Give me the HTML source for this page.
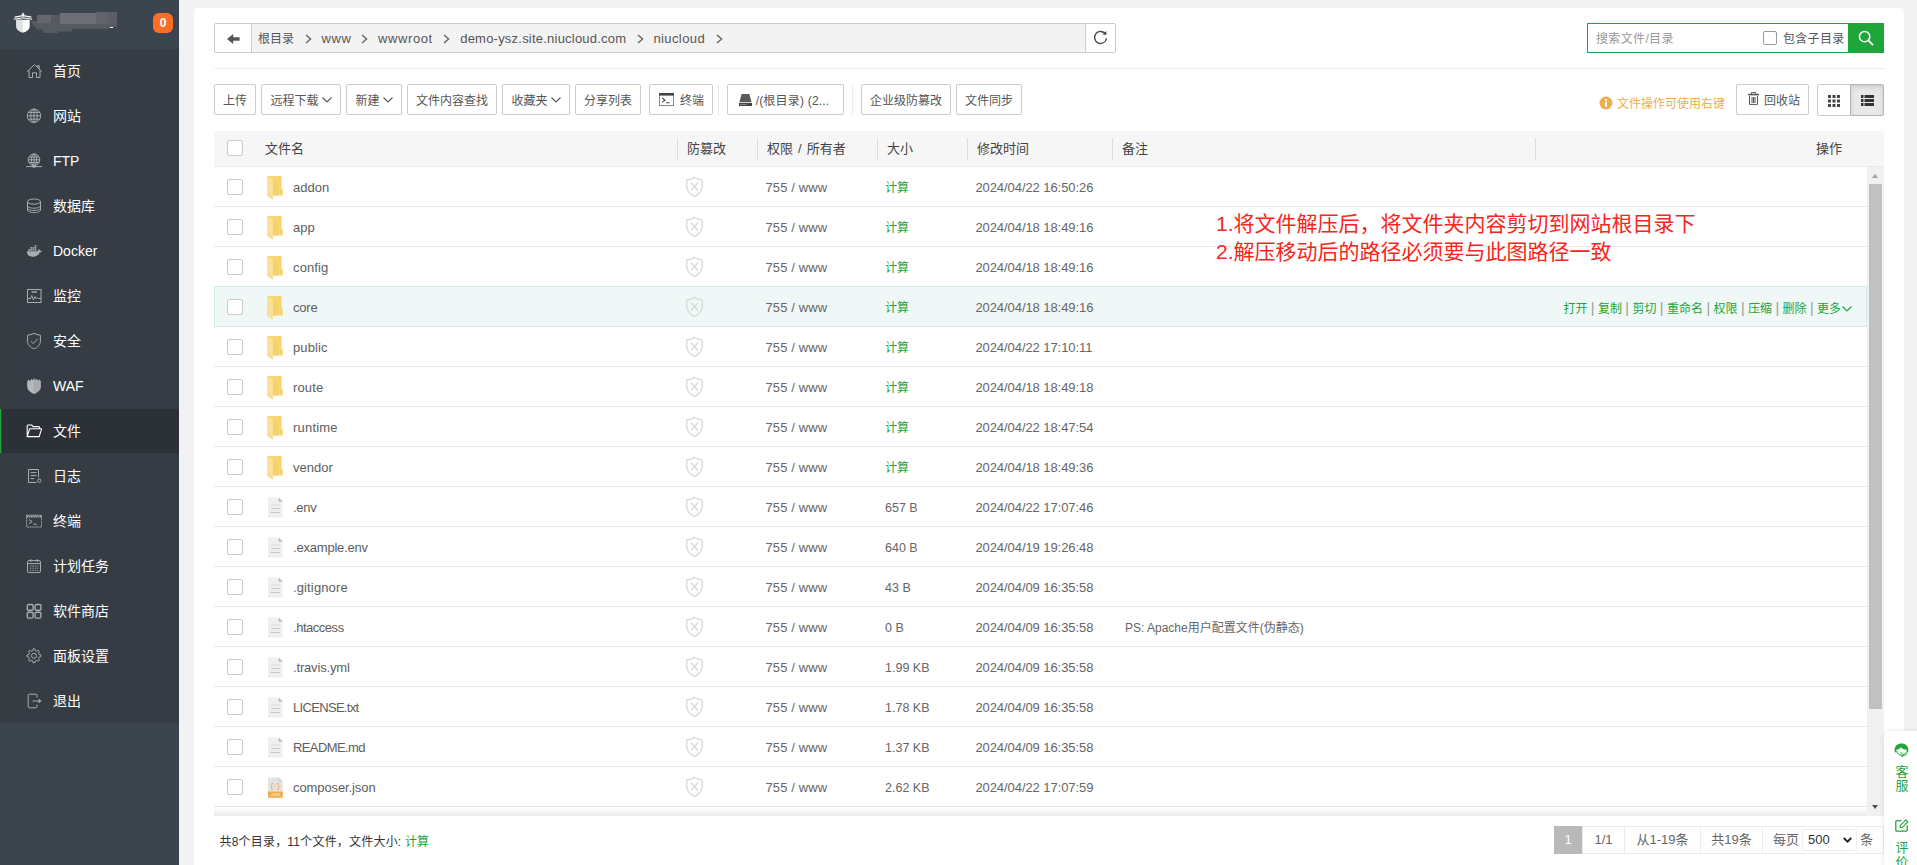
<!DOCTYPE html>
<html lang="zh-CN">
<head>
<meta charset="utf-8">
<title>文件管理</title>
<style>
*{box-sizing:border-box;}
html,body{margin:0;padding:0;}
body{width:1917px;height:865px;overflow:hidden;background:#f2f2f2;font-family:"Liberation Sans","Noto Sans CJK SC",sans-serif;font-size:12px;color:#666;position:relative;}
svg{display:block;}
/* sidebar */
.sidebar{position:absolute;left:0;top:0;width:179px;height:865px;background:#3c444d;}
.sb-head{position:absolute;left:0;top:0;width:179px;height:49px;}
.sb-logo{position:absolute;left:14px;top:12px;}
.sb-blur{position:absolute;left:31px;top:12px;width:86px;height:21px;}
.sb-badge{position:absolute;left:153px;top:13px;width:20px;height:20px;border-radius:6px;background:#fc6d26;color:#fff;font-weight:bold;font-size:12px;line-height:20px;text-align:center;}
.menu{position:absolute;left:0;top:49px;width:179px;height:674px;background:#353c44;margin:0;padding:0;list-style:none;}
.menu li{height:44px;margin-bottom:1px;position:relative;color:#fff;font-size:14px;line-height:44px;padding-left:53px;white-space:nowrap;}
.menu li svg{position:absolute;left:26px;top:14px;}
.menu li.on{background:#2c3138;box-shadow:inset 1.3px 0 0 #20a53a;}
.menu{box-shadow:inset 1px 0 0 #3b3b3c;}

/* main */
.main{position:absolute;left:194px;top:8px;width:1710px;height:880px;background:#fff;border-radius:4px;}
.abs{position:absolute;}
.path{position:absolute;left:20px;top:15px;width:902px;height:30px;border:1px solid #ccc;border-radius:2px;background:#f3f3f3;}
.path .back{position:absolute;left:0;top:0;width:37px;height:28px;background:#fff;border-right:1px solid #ccc;border-radius:2px 0 0 2px;}
.path .refresh{position:absolute;right:0;top:0;width:30px;height:28px;background:#fff;border-left:1px solid #ccc;border-radius:0 2px 2px 0;}
.path .crumbs{position:absolute;left:0;top:0;height:28px;line-height:28px;font-size:13px;color:#555;white-space:nowrap;}
.path .crumbs span{position:absolute;top:0.5px;}
.path .crumbs .cj{font-size:12px;}
.path .cv{position:absolute;top:10px;}
.search{position:absolute;left:1393px;top:15px;width:297px;height:30px;border:1px solid #20a53a;background:#fff;}
.search .ph{position:absolute;left:8px;top:0;line-height:30px;font-size:12px;color:#999;letter-spacing:0.35px;}
.search .cb{position:absolute;left:175px;top:7px;width:14px;height:14px;border:1px solid #999;border-radius:2px;background:#fff;}
.search .lbl{position:absolute;left:195px;top:0;line-height:30px;font-size:12px;color:#555;letter-spacing:0.3px;}
.search .go{position:absolute;right:-1px;top:-1px;width:36px;height:30px;background:#20a53a;}
.hr{position:absolute;left:20px;top:60px;width:1670px;height:1px;background:#ececec;}
.btn{position:absolute;top:76px;height:31px;border:1px solid #ccc;border-radius:2px;background:#fff;color:#555;font-size:12px;line-height:29px;padding-top:1.5px;text-align:center;white-space:nowrap;}
.vsep{position:absolute;top:76px;width:1px;height:31px;background:#ebebeb;}
/* table */
.thead{position:absolute;left:20px;top:123px;width:1670px;height:36px;background:#f6f6f6;border-bottom:1px solid #e9e9e9;font-size:13px;color:#444;line-height:35px;}
.thead span{position:absolute;top:0;}
.thead i{position:absolute;top:7px;width:1px;height:22px;background:#ddd;}
.ck{position:absolute;left:13px;width:16px;height:16px;border:1px solid #cbcbcb;border-radius:2px;background:#fff;}
.tbody{position:absolute;left:20px;top:159px;width:1653px;height:640px;overflow:hidden;}
.row{position:absolute;left:0;width:1653px;height:40px;border-bottom:1px solid #e8e8e8;line-height:40px;font-size:12px;color:#666;}
.row span{position:absolute;top:1px;white-space:nowrap;}
.row .nm{left:79px;font-size:13px;color:#5e5e5e;}
.row .pm{left:551.5px;font-size:13px;letter-spacing:0.12px;}
.row .sz{left:671px;font-size:12.5px;}
.row .sz.g{color:#20a53a;font-size:12px;left:671px;}
.row .tm{left:761.4px;font-size:13px;letter-spacing:-0.07px;}
.row .ps{left:911px;}
.row .ico{position:absolute;left:51px;top:8px;}
.row .sh{position:absolute;left:470px;top:8px;}
.row.hv{background:#f0f8f7;border-bottom:1px solid #d6ebea;box-shadow:0 -1px 0 #d6ebea, inset 1px 0 0 #d6ebea, inset -1px 0 0 #d6ebea;}
.ops{position:absolute;right:15px;top:0.5px;word-spacing:0.1px;color:#20a53a;font-size:12px;}
.ops b{font-weight:normal;color:#999;font-size:14px;}

.btn .dd{display:inline-block;margin-left:3px;vertical-align:2px;}
.btn .ti{position:absolute;left:9px;top:8px;}
.btn .di{position:absolute;left:11px;top:9px;}
.btn .tr{position:absolute;left:11px;top:7px;}
.btn.vt{height:32px;}
.btn.vt svg{position:absolute;left:10px;top:10px;}
.btn.vt.act{background:#e8e8e8;border-color:#b4b4b4;box-shadow:inset 0 2px 4px rgba(0,0,0,.13);}
.tip{position:absolute;left:1405px;top:78.5px;height:30px;line-height:34px;font-size:12px;color:#f0ad4e;white-space:nowrap;}
.tip svg{position:absolute;left:0;top:9px;}
.tip span{margin-left:18px;}
.note{position:absolute;left:1022px;top:202px;font-size:21px;line-height:27.5px;color:#f6261c;white-space:nowrap;}
.sbar{position:absolute;left:1673px;top:159px;width:17px;height:649px;background:#f1f1f1;}
.sthumb{position:absolute;left:2px;top:17px;width:13px;height:525px;background:#c1c1c1;}
.sup{position:absolute;left:5px;top:7px;width:0;height:0;border:3.5px solid transparent;border-top:0;border-bottom:4px solid #a3a3a3;}
.sdn{position:absolute;left:5px;bottom:7px;width:0;height:0;border:3.5px solid transparent;border-bottom:0;border-top:4px solid #505050;}
.tshadow{position:absolute;left:20px;top:798px;width:1653px;height:10px;background:linear-gradient(#fff,#ebebeb);border-top:1px solid #e4e4e4;}
.foot{position:absolute;left:25.5px;top:819px;line-height:30px;font-size:12px;color:#333;letter-spacing:0.2px;white-space:nowrap;}
.pager{position:absolute;left:1360px;top:818px;width:330px;height:28px;}
.pg{position:absolute;top:0;height:28px;border:1px solid #ececec;background:#fff;line-height:26px;text-align:center;font-size:13px;color:#666;white-space:nowrap;}
.pg.cur{background:#b9b9b9;border-color:#b9b9b9;color:#fff;}
.sel{display:inline-block;position:absolute;left:39px;top:2px;width:55px;height:22px;border:1px solid #eee;border-radius:2px;line-height:20px;padding-left:5px;color:#333;text-align:left;}
.sel svg{position:absolute;right:4.5px;top:7px;}
.tiao{position:absolute;left:97px;top:0;}
.ops .chev{display:inline-block;margin-left:1px;vertical-align:1px;}
.float{position:absolute;left:1884px;top:731px;width:40px;height:140px;background:#fff;border-radius:6px 0 0 0;box-shadow:0 0 5px rgba(0,0,0,.10);color:#20a53a;font-size:13px;line-height:14px;}
.float span{position:absolute;left:11px;width:14px;text-align:center;}
.float svg{position:absolute;}
</style>
</head>
<body>
<svg width="0" height="0" style="position:absolute"><defs>
<symbol id="i-dir" viewBox="0 0 20 26"><path d="M2.4 1 H16.6 V13.4 L17.8 14.4 V20.6 H7.6 V24.6 L2.4 21 Z" fill="#f6d56e"/><path d="M8 4.2 L8 20.6 L13 20.6 C12 14 10.6 8.6 8 4.2 Z" fill="#f2cf63" opacity=".55"/><path d="M2.4 1.6 L8 4.2 V24.8 L2.4 21 Z" fill="#fbe09a"/></symbol>
<symbol id="i-file" viewBox="0 0 20 26"><path d="M3 2.4 H13.6 L17.6 6.4 V22.4 H3 Z" fill="#efefef"/><path d="M13.6 2.4 L17.6 6.4 H13.6 Z" fill="#b4b4b4"/><path d="M6 10 H14.6" stroke="#dadada" stroke-width="1"/><path d="M6 13.5 H14.6 M6 17.5 H14.6" stroke="#c9c9c9" stroke-width="1"/></symbol>
<symbol id="i-json" viewBox="0 0 20 26"><path d="M3 2.4 H13.6 L17.8 6.6 V22.6 H3 Z" fill="#e3e4e6"/><path d="M13.6 2.4 L17.8 6.6 H13.6 Z" fill="#cfcfcf"/><rect x="3" y="16.4" width="14.8" height="6.3" rx="0.6" fill="#f0ad4e"/><text x="10.4" y="20.7" font-size="3.4" font-weight="bold" font-family="Liberation Sans,sans-serif" fill="#fbe3b8" text-anchor="middle">JSON</text><text x="10.2" y="12.6" font-size="8" font-weight="bold" font-family="Liberation Mono,monospace" fill="#f0a92e" text-anchor="middle" textLength="9.5" lengthAdjust="spacingAndGlyphs">{:}</text></symbol>
<symbol id="i-shield" viewBox="0 0 21 24"><path d="M10.5 2.3 C12.8 3.9 15.4 4.8 18.3 5.2 V10.8 C18.3 15.8 14.6 19.6 10.5 21.4 C6.4 19.6 2.7 15.8 2.7 10.8 V5.2 C5.6 4.8 8.2 3.9 10.5 2.3 Z" fill="none" stroke="#d5d8d8" stroke-width="1.3"/><path d="M7 7.9 L14 15.3 M14 7.9 L7 15.3" stroke="#d2d2d2" stroke-width="1.1"/></symbol>
</defs></svg>
<div class="sidebar">
  <div class="sb-head">
    <svg class="sb-logo" width="20" height="22" viewBox="0 0 20 22" style="position:absolute;left:13px;top:12px"><path d="M3.3 7.8 H16.7 V14 C16.7 17.6 13.6 19.6 10 20.6 C6.4 19.6 3.3 17.6 3.3 14 Z" fill="#fff"/><path d="M3.3 7.8 H10 V20.6 C6.4 19.6 3.3 17.6 3.3 14 Z" fill="#e2e2e2"/><path d="M1.6 5.1 L10 3.6 L18.4 5.1 M0.8 7.2 L10 5.8 L19.2 7.2" fill="none" stroke="#fff" stroke-width="1.1"/><path d="M10 0.8 V4.4 M8.6 2.2 H11.4" stroke="#fff" stroke-width="1.1"/></svg>
    <svg style="position:absolute;left:28px;top:10px" width="92" height="25" viewBox="0 0 92 25"><path d="M2 11 L9 11 L9 5 L32 5 L32 3 L68 3 L68 2 L89 2 L89 17 L80 17 L80 19 L44 19 L44 21.5 L30 21.5 L30 23 L15 23 L15 19.5 L9 19.5 Z" fill="#565a61"/><rect x="32" y="3" width="36" height="11" fill="#6c6f75"/><rect x="9" y="5" width="14" height="8" fill="#64676d"/><rect x="68" y="2" width="12" height="12" fill="#606369"/><rect x="80" y="2" width="9" height="11" fill="#5b5e65"/><rect x="81.7" y="17" width="3.3" height="1" fill="#fff"/></svg>
    <div class="sb-badge">0</div>
  </div>
  <ul class="menu">
    <li><svg width="16" height="16" viewBox="0 0 16 16" fill="none" stroke="#a9adb2" stroke-width="1" ><path d="M1.2 8.6 L8.5 1.5 L15.8 8.6 M3 7.2 V14.5 H6.5 V9.8 H10.5 V14.5 H14 V7.2 M11.6 4.3 V2.6 H13.2 V5.9"/></svg>首页</li>
    <li><svg width="16" height="16" viewBox="0 0 16 16" fill="none" stroke="#a9adb2" stroke-width="1" ><circle cx="8" cy="7.8" r="6.7"/><ellipse cx="8" cy="7.8" rx="3.2" ry="6.7"/><path d="M8 1.1 V14.5 M1.3 7.8 H14.7 M2.3 4.4 H13.7 M2.3 11.2 H13.7"/></svg>网站</li>
    <li><svg width="16" height="16" viewBox="0 0 16 16" fill="none" stroke="#a9adb2" stroke-width="1" ><circle cx="8" cy="6.8" r="5.8"/><ellipse cx="8" cy="6.8" rx="2.7" ry="5.8"/><path d="M8 1 V12.6 M2.2 6.8 H13.8 M3 4 H13 M3 9.6 H13 M0 13.6 H16"/><rect x="6.5" y="12.6" width="3" height="2" fill="#a9adb2" stroke="none"/></svg>FTP</li>
    <li><svg width="16" height="16" viewBox="0 0 16 16" fill="none" stroke="#a9adb2" stroke-width="1" ><ellipse cx="8" cy="3.6" rx="6.5" ry="2.6"/><path d="M1.5 3.6 V12 C1.5 13.5 4.4 14.6 8 14.6 C11.6 14.6 14.5 13.5 14.5 12 V3.6 M1.5 7.6 C1.5 9 4.4 10.2 8 10.2 C11.6 10.2 14.5 9 14.5 7.6 M1.5 10 C1.5 11.4 4.4 12.5 8 12.5 C11.6 12.5 14.5 11.4 14.5 10"/></svg>数据库</li>
    <li><svg width="16" height="16" viewBox="0 0 16 16" fill="none" stroke="#a9adb2" stroke-width="1" ><path d="M0.8 8.2 H11.6 C11.9 7.2 12.6 6.4 13.2 6 C13.7 6.6 13.9 7.3 13.8 7.9 C14.6 7.7 15.4 7.8 16 8.2 C15.4 9.1 14.5 9.4 13.6 9.4 C12.4 12.4 9.8 13.8 6.6 13.8 C3 13.8 1 11.8 0.8 8.2 Z" fill="#a9adb2" stroke="none"/><g fill="#a9adb2" stroke="none"><rect x="2.3" y="6.1" width="1.7" height="1.6"/><rect x="4.4" y="6.1" width="1.7" height="1.6"/><rect x="6.5" y="6.1" width="1.7" height="1.6"/><rect x="8.6" y="6.1" width="1.7" height="1.6"/><rect x="4.4" y="4.1" width="1.7" height="1.6"/><rect x="6.5" y="4.1" width="1.7" height="1.6"/><rect x="8.6" y="4.1" width="1.7" height="1.6"/><rect x="8.6" y="2.1" width="1.7" height="1.6"/></g></svg>Docker</li>
    <li><svg width="16" height="16" viewBox="0 0 16 16" fill="none" stroke="#a9adb2" stroke-width="1" ><rect x="1.5" y="1.5" width="13.5" height="13"/><path d="M1.5 10.5 H4.5 L5.8 7.5 L7.4 11.8 L9 8.6 L10.2 10.8 L11.4 9.6 L12.4 10.5 H15"/><rect x="5.5" y="3" width="5.5" height="2" fill="#a9adb2" stroke="none" opacity=".7"/></svg>监控</li>
    <li><svg width="16" height="16" viewBox="0 0 16 16" fill="none" stroke="#a9adb2" stroke-width="1" ><path d="M8 0.4 C10 1.4 12.2 2 14.4 2.2 V8 C14.4 11.8 11.4 14.6 8 16 C4.6 14.6 1.6 11.8 1.6 8 V2.2 C3.8 2 6 1.4 8 0.4 Z"/><path d="M4.8 8.2 L7.3 10.6 L11.6 5.8"/></svg>安全</li>
    <li><svg width="16" height="16" viewBox="0 0 16 16" fill="none" stroke="#a9adb2" stroke-width="1" ><path d="M1.2 3.4 L2.6 1.4 L4 3.2 L5.3 0.8 L6.7 2.6 L8 0 L9.3 2.6 L10.7 0.8 L12 3.2 L13.4 1.4 L14.8 3.4 V8.6 C14.8 12 11.6 14.6 8 16 C4.4 14.6 1.2 12 1.2 8.6 Z" fill="#b6b8bb" stroke="none"/><path d="M8 0 L9.3 2.6 L10.7 0.8 L12 3.2 L13.4 1.4 L14.8 3.4 V8.6 C14.8 12 11.6 14.6 8 16 Z" fill="#9da0a4" stroke="none"/><path d="M9 2 V15.4 M10.4 1.4 V14.8 M11.8 3 V13.6 M13.2 1.8 V12" stroke="#c2c4c7" stroke-width="0.5"/></svg>WAF</li>
    <li class="on"><svg width="16" height="16" viewBox="0 0 16 16" fill="none" stroke="#a9adb2" stroke-width="1" ><path d="M1.2 13.6 V3 C1.2 2.4 1.6 2 2.2 2 H5.6 L7.2 3.6 H12.6 C13.2 3.6 13.6 4 13.6 4.6 V5.8 M1.2 13.6 L3.6 5.8 H15.6 L13.2 13.6 Z" stroke="#fff" stroke-width="1.1" stroke-linejoin="round"/></svg>文件</li>
    <li><svg width="16" height="16" viewBox="0 0 16 16" fill="none" stroke="#a9adb2" stroke-width="1" ><path d="M10.5 14.5 H2.5 V1.5 H12.5 V9.2 M4.5 4.6 H10.5 M4.5 7.6 H10.5 M4.5 10.6 H8"/><circle cx="13.3" cy="12.6" r="1.7"/></svg>日志</li>
    <li><svg width="16" height="16" viewBox="0 0 16 16" fill="none" stroke="#a9adb2" stroke-width="1" ><rect x="0.6" y="2.2" width="15" height="11.8" stroke-dasharray="1.2 0.5"/><path d="M0.6 3.4 H15.6" stroke-width="2" stroke-dasharray="1.6 0.6"/><path d="M3 6.6 L6.2 8.6 L3 10.6 M7.4 11.2 H10.8"/></svg>终端</li>
    <li><svg width="16" height="16" viewBox="0 0 16 16" fill="none" stroke="#a9adb2" stroke-width="1" ><rect x="1.5" y="2.6" width="13" height="12" rx="1.5"/><path d="M1.5 5.6 H14.5 M4.8 1 V4 M11.2 1 V4"/><path d="M3.8 8 H12.4 M3.8 10.2 H12.4 M3.8 12.4 H12.4" stroke-dasharray="1.6 0.9" opacity=".85"/></svg>计划任务</li>
    <li><svg width="16" height="16" viewBox="0 0 16 16" fill="none" stroke="#a9adb2" stroke-width="1.4"><rect x="1.3" y="1.5" width="5.8" height="5.8" rx="1.3"/><rect x="9.1" y="1.5" width="5.8" height="5.8" rx="1.3"/><rect x="1.3" y="9.3" width="5.8" height="5.8" rx="1.3"/><rect x="9.1" y="9.3" width="5.8" height="5.8" rx="1.3"/></svg>软件商店</li>
    <li><svg width="16" height="16" viewBox="0 0 16 16" fill="none" stroke="#a9adb2" stroke-width="1" ><path d="M7.12 0.86 L8.88 0.86 L9.24 2.65 L10.77 3.28 L12.29 2.27 L13.53 3.51 L12.52 5.03 L13.15 6.56 L14.94 6.92 L14.94 8.68 L13.15 9.04 L12.52 10.57 L13.53 12.09 L12.29 13.33 L10.77 12.32 L9.24 12.95 L8.88 14.74 L7.12 14.74 L6.76 12.95 L5.23 12.32 L3.71 13.33 L2.47 12.09 L3.48 10.57 L2.85 9.04 L1.06 8.68 L1.06 6.92 L2.85 6.56 L3.48 5.03 L2.47 3.51 L3.71 2.27 L5.23 3.28 L6.76 2.65 Z" stroke-linejoin="round"/><circle cx="8" cy="7.8" r="2.5"/></svg>面板设置</li>
    <li><svg width="16" height="16" viewBox="0 0 16 16" fill="none" stroke="#a9adb2" stroke-width="1" ><path d="M11 4.6 V2.2 C11 1.6 10.6 1.2 10 1.2 H3.2 C2.6 1.2 2.2 1.6 2.2 2.2 V13.8 C2.2 14.4 2.6 14.8 3.2 14.8 H10 C10.6 14.8 11 14.4 11 13.8 V11.4 M6.5 8 H14"/><path d="M12.6 5.6 L15.6 8 L12.6 10.4 Z" fill="#a9adb2" stroke="none"/></svg>退出</li>
  </ul>
</div>
<div class="main">
  <div class="path">
    <div class="back"><svg width="13" height="10" viewBox="0 0 13 10" style="position:absolute;left:12px;top:9.5px"><path d="M0 5 L6.2 0 V3.2 H12.6 V6.8 H6.2 V10 Z" fill="#555"/></svg></div>
    <div class="crumbs">
      <span class="cj" style="left:43px">根目录</span><svg class="cv" style="left:89.5px" width="7" height="10" viewBox="0 0 7 10"><path d="M1 1 L5.6 5 L1 9" fill="none" stroke="#666" stroke-width="1.4"/></svg>
      <span id="c1" style="left:106.4px;letter-spacing:0.62px">www</span><svg class="cv" style="left:146px" width="7" height="10" viewBox="0 0 7 10"><path d="M1 1 L5.6 5 L1 9" fill="none" stroke="#666" stroke-width="1.4"/></svg>
      <span id="c2" style="left:163px;letter-spacing:0.6px">wwwroot</span><svg class="cv" style="left:228px" width="7" height="10" viewBox="0 0 7 10"><path d="M1 1 L5.6 5 L1 9" fill="none" stroke="#666" stroke-width="1.4"/></svg>
      <span id="c3" style="left:245.2px;letter-spacing:0.22px">demo-ysz.site.niucloud.com</span><svg class="cv" style="left:421.5px" width="7" height="10" viewBox="0 0 7 10"><path d="M1 1 L5.6 5 L1 9" fill="none" stroke="#666" stroke-width="1.4"/></svg>
      <span id="c4" style="left:438.4px;letter-spacing:0.4px">niucloud</span><svg class="cv" style="left:500.5px" width="7" height="10" viewBox="0 0 7 10"><path d="M1 1 L5.6 5 L1 9" fill="none" stroke="#666" stroke-width="1.4"/></svg>
    </div>
    <div class="refresh"><svg width="15" height="15" viewBox="0 0 15 15" style="position:absolute;left:7px;top:6px"><path d="M12.6 4.2 A6 6 0 1 0 13.5 8.4" fill="none" stroke="#444" stroke-width="1.3"/><path d="M9.6 4.6 L13.4 4.8 L13.2 1 Z" fill="#444"/></svg></div>
  </div>
  <div class="search">
    <div class="ph">搜索文件/目录</div>
    <div class="cb"></div>
    <div class="lbl">包含子目录</div>
    <div class="go"><svg width="16" height="16" viewBox="0 0 16 16" style="position:absolute;left:10px;top:7px"><circle cx="6.6" cy="6.6" r="5.2" fill="none" stroke="#fff" stroke-width="1.5"/><path d="M10.4 10.4 L14.6 14.6" stroke="#fff" stroke-width="1.7" stroke-linecap="round"/></svg></div>
  </div>
  <div class="hr"></div>
  <div class="btn" style="left:20px;width:42px">上传</div>
  <div class="btn" style="left:67px;width:80px">远程下载<svg class="dd" width="10" height="6" viewBox="0 0 10 6"><path d="M0.5 0.5 L5 5 L9.5 0.5" fill="none" stroke="#555" stroke-width="1.1"/></svg></div>
  <div class="btn" style="left:152px;width:56px">新建<svg class="dd" width="10" height="6" viewBox="0 0 10 6"><path d="M0.5 0.5 L5 5 L9.5 0.5" fill="none" stroke="#555" stroke-width="1.1"/></svg></div>
  <div class="btn" style="left:213px;width:90px">文件内容查找</div>
  <div class="btn" style="left:308px;width:68px">收藏夹<svg class="dd" width="10" height="6" viewBox="0 0 10 6"><path d="M0.5 0.5 L5 5 L9.5 0.5" fill="none" stroke="#555" stroke-width="1.1"/></svg></div>
  <div class="btn" style="left:381px;width:66px">分享列表</div>
  <div class="btn" style="left:455px;width:64px"><svg class="ti" width="15" height="13" viewBox="0 0 15 13"><rect x="0.5" y="0.5" width="14" height="12" fill="none" stroke="#888"/><rect x="0" y="0" width="15" height="2.6" fill="#444"/><path d="M3.2 5 L6 7.2 L3.2 9.4 M7.2 9.8 H10.6" fill="none" stroke="#444" stroke-width="1.1"/></svg><span style="margin-left:22px">终端</span></div>
  <div class="vsep" style="left:524px"></div>
  <div class="btn" style="left:533px;width:117px"><svg class="di" width="13" height="12" viewBox="0 0 13 12"><path d="M2.6 0 H10.4 L12.6 8.2 H0.4 Z" fill="#5a5a5a"/><rect x="0" y="9" width="13" height="3" fill="#444"/><path d="M1.5 10.5 H8" stroke="#ddd" stroke-width="0.8" stroke-dasharray="1 1"/></svg><span style="margin-left:14px;letter-spacing:0.2px">/(根目录) (2...</span></div>
  <div class="vsep" style="left:658px"></div>
  <div class="btn" style="left:667px;width:90px">企业级防篡改</div>
  <div class="btn" style="left:762px;width:66px">文件同步</div>
  <div class="tip"><svg width="14" height="14" viewBox="0 0 14 14"><circle cx="7" cy="7" r="6.5" fill="#f0ad4e"/><rect x="6" y="3" width="2" height="2" fill="#fff"/><rect x="6" y="6" width="2" height="5" fill="#fff"/></svg><span>文件操作可使用右键</span></div>
  <div class="btn" style="left:1542px;width:73px"><svg class="tr" width="11" height="13" viewBox="0 0 11 13"><path d="M0 2.6 H11" fill="none" stroke="#555" stroke-width="1.5"/><path d="M3.4 2 V0.6 H7.6 V2 M1.5 4 V12.4 H9.5 V4 M4 5 V11 M5.5 5 V11 M7 5 V11" fill="none" stroke="#555" stroke-width="1"/></svg><span style="margin-left:19px">回收站</span></div>
  <div class="btn vt" style="left:1623px;width:34px;border-radius:2px 0 0 2px"><svg width="12" height="12" viewBox="0 0 12 12" fill="#444"><rect x="0" y="0" width="3" height="3"/><rect x="4.5" y="0" width="3" height="3"/><rect x="9" y="0" width="3" height="3"/><rect x="0" y="4.5" width="3" height="3"/><rect x="4.5" y="4.5" width="3" height="3"/><rect x="9" y="4.5" width="3" height="3"/><rect x="0" y="9" width="3" height="3"/><rect x="4.5" y="9" width="3" height="3"/><rect x="9" y="9" width="3" height="3"/></svg></div>
  <div class="btn vt act" style="left:1656px;width:34px;border-radius:0 2px 2px 0"><svg width="13" height="11" viewBox="0 0 13 11" fill="#333"><rect x="0" y="0" width="2.5" height="3"/><rect x="3.5" y="0" width="9.5" height="3"/><rect x="0" y="4" width="2.5" height="3"/><rect x="3.5" y="4" width="9.5" height="3"/><rect x="0" y="8" width="2.5" height="3"/><rect x="3.5" y="8" width="9.5" height="3"/></svg></div>
  <div class="thead">
    <div class="ck" style="top:9px"></div>
    <span style="left:51px">文件名</span>
    <i style="left:463px"></i><span style="left:473px">防篡改</span>
    <i style="left:543px"></i><span style="left:553px;word-spacing:1.5px">权限 / 所有者</span>
    <i style="left:663px"></i><span style="left:673px">大小</span>
    <i style="left:753px"></i><span style="left:763px">修改时间</span>
    <i style="left:898px"></i><span style="left:908px">备注</span>
    <i style="left:1321px"></i><span style="left:1602px">操作</span>
  </div>
  <div class="tbody">
<div class="row" style="top:0px"><div class="ck" style="top:12px"></div><svg class="ico" width="20" height="26"><use href="#i-dir"/></svg><span class="nm">addon</span><svg class="sh" width="21" height="24"><use href="#i-shield"/></svg><span class="pm">755 / www</span><span class="sz g">计算</span><span class="tm">2024/04/22 16:50:26</span></div>
<div class="row" style="top:40px"><div class="ck" style="top:12px"></div><svg class="ico" width="20" height="26"><use href="#i-dir"/></svg><span class="nm">app</span><svg class="sh" width="21" height="24"><use href="#i-shield"/></svg><span class="pm">755 / www</span><span class="sz g">计算</span><span class="tm">2024/04/18 18:49:16</span></div>
<div class="row" style="top:80px"><div class="ck" style="top:12px"></div><svg class="ico" width="20" height="26"><use href="#i-dir"/></svg><span class="nm" style="letter-spacing:0.13px">config</span><svg class="sh" width="21" height="24"><use href="#i-shield"/></svg><span class="pm">755 / www</span><span class="sz g">计算</span><span class="tm">2024/04/18 18:49:16</span></div>
<div class="row hv" style="top:120px"><div class="ck" style="top:12px"></div><svg class="ico" width="20" height="26"><use href="#i-dir"/></svg><span class="nm" style="letter-spacing:-0.2px">core</span><svg class="sh" width="21" height="24"><use href="#i-shield"/></svg><span class="pm">755 / www</span><span class="sz g">计算</span><span class="tm">2024/04/18 18:49:16</span><span class="ops">打开 <b>|</b> 复制 <b>|</b> 剪切 <b>|</b> 重命名 <b>|</b> 权限 <b>|</b> 压缩 <b>|</b> 删除 <b>|</b> 更多<svg class="chev" width="10" height="6" viewBox="0 0 10 6"><path d="M0.5 0.5 L5 5 L9.5 0.5" fill="none" stroke="#20a53a" stroke-width="1.2"/></svg></span></div>
<div class="row" style="top:160px"><div class="ck" style="top:12px"></div><svg class="ico" width="20" height="26"><use href="#i-dir"/></svg><span class="nm" style="letter-spacing:0.13px">public</span><svg class="sh" width="21" height="24"><use href="#i-shield"/></svg><span class="pm">755 / www</span><span class="sz g">计算</span><span class="tm">2024/04/22 17:10:11</span></div>
<div class="row" style="top:200px"><div class="ck" style="top:12px"></div><svg class="ico" width="20" height="26"><use href="#i-dir"/></svg><span class="nm" style="letter-spacing:0.13px">route</span><svg class="sh" width="21" height="24"><use href="#i-shield"/></svg><span class="pm">755 / www</span><span class="sz g">计算</span><span class="tm">2024/04/18 18:49:18</span></div>
<div class="row" style="top:240px"><div class="ck" style="top:12px"></div><svg class="ico" width="20" height="26"><use href="#i-dir"/></svg><span class="nm" style="letter-spacing:0.2px">runtime</span><svg class="sh" width="21" height="24"><use href="#i-shield"/></svg><span class="pm">755 / www</span><span class="sz g">计算</span><span class="tm">2024/04/22 18:47:54</span></div>
<div class="row" style="top:280px"><div class="ck" style="top:12px"></div><svg class="ico" width="20" height="26"><use href="#i-dir"/></svg><span class="nm">vendor</span><svg class="sh" width="21" height="24"><use href="#i-shield"/></svg><span class="pm">755 / www</span><span class="sz g">计算</span><span class="tm">2024/04/18 18:49:36</span></div>
<div class="row" style="top:320px"><div class="ck" style="top:12px"></div><svg class="ico" width="20" height="26"><use href="#i-file"/></svg><span class="nm" style="letter-spacing:-0.3px">.env</span><svg class="sh" width="21" height="24"><use href="#i-shield"/></svg><span class="pm">755 / www</span><span class="sz">657 B</span><span class="tm">2024/04/22 17:07:46</span></div>
<div class="row" style="top:360px"><div class="ck" style="top:12px"></div><svg class="ico" width="20" height="26"><use href="#i-file"/></svg><span class="nm" style="letter-spacing:-0.2px">.example.env</span><svg class="sh" width="21" height="24"><use href="#i-shield"/></svg><span class="pm">755 / www</span><span class="sz">640 B</span><span class="tm">2024/04/19 19:26:48</span></div>
<div class="row" style="top:400px"><div class="ck" style="top:12px"></div><svg class="ico" width="20" height="26"><use href="#i-file"/></svg><span class="nm" style="letter-spacing:0.13px">.gitignore</span><svg class="sh" width="21" height="24"><use href="#i-shield"/></svg><span class="pm">755 / www</span><span class="sz">43 B</span><span class="tm">2024/04/09 16:35:58</span></div>
<div class="row" style="top:440px"><div class="ck" style="top:12px"></div><svg class="ico" width="20" height="26"><use href="#i-file"/></svg><span class="nm" style="letter-spacing:-0.47px">.htaccess</span><svg class="sh" width="21" height="24"><use href="#i-shield"/></svg><span class="pm">755 / www</span><span class="sz">0 B</span><span class="tm">2024/04/09 16:35:58</span><span class="ps">PS: Apache用户配置文件(伪静态)</span></div>
<div class="row" style="top:480px"><div class="ck" style="top:12px"></div><svg class="ico" width="20" height="26"><use href="#i-file"/></svg><span class="nm" style="letter-spacing:-0.17px">.travis.yml</span><svg class="sh" width="21" height="24"><use href="#i-shield"/></svg><span class="pm">755 / www</span><span class="sz">1.99 KB</span><span class="tm">2024/04/09 16:35:58</span></div>
<div class="row" style="top:520px"><div class="ck" style="top:12px"></div><svg class="ico" width="20" height="26"><use href="#i-file"/></svg><span class="nm" style="letter-spacing:-0.68px">LICENSE.txt</span><svg class="sh" width="21" height="24"><use href="#i-shield"/></svg><span class="pm">755 / www</span><span class="sz">1.78 KB</span><span class="tm">2024/04/09 16:35:58</span></div>
<div class="row" style="top:560px"><div class="ck" style="top:12px"></div><svg class="ico" width="20" height="26"><use href="#i-file"/></svg><span class="nm" style="letter-spacing:-0.6px">README.md</span><svg class="sh" width="21" height="24"><use href="#i-shield"/></svg><span class="pm">755 / www</span><span class="sz">1.37 KB</span><span class="tm">2024/04/09 16:35:58</span></div>
<div class="row" style="top:600px"><div class="ck" style="top:12px"></div><svg class="ico" width="20" height="26"><use href="#i-json"/></svg><span class="nm" style="letter-spacing:-0.1px">composer.json</span><svg class="sh" width="21" height="24"><use href="#i-shield"/></svg><span class="pm">755 / www</span><span class="sz">2.62 KB</span><span class="tm">2024/04/22 17:07:59</span></div>
  </div>
  <div class="note">1.将文件解压后，将文件夹内容剪切到网站根目录下<br>2.解压移动后的路径必须要与此图路径一致</div>
  <div class="sbar"><div class="sthumb"></div><div class="sup"></div><div class="sdn"></div></div>
  <div class="tshadow"></div>
  <div class="foot">共8个目录，11个文件，文件大小: <span style="color:#20a53a">计算</span></div>
  <div class="pager">
    <span class="pg cur" style="left:0;width:28px">1</span>
    <span class="pg" style="left:28px;width:43px">1/1</span>
    <span class="pg" style="left:70px;width:77px">从1-19条</span>
    <span class="pg" style="left:146px;width:63px">共19条</span>
    <span class="pg" style="left:208px;width:122px;text-align:left;padding-left:10px">每页<span class="sel">500<svg width="9" height="6" viewBox="0 0 9 6"><path d="M0.8 1 L4.5 4.6 L8.2 1" fill="none" stroke="#222" stroke-width="1.9"/></svg></span><span class="tiao">条</span></span>
  </div>
</div>
<div class="float">
  <svg style="left:10px;top:11.5px" width="15" height="14" viewBox="0 0 15 14"><path d="M0.6 7.4 C0.6 3 3.6 0.5 7.5 0.5 C11.4 0.5 14.4 3 14.4 7.4 C14.4 8.8 13.6 9.6 12.6 9.6 V6.6 C10.4 6.8 8 5.8 6.8 4.2 C6 5.6 4.2 6.6 2.4 6.8 V9.6 C1.4 9.6 0.6 8.8 0.6 7.4 Z" fill="#20a53a"/><path d="M2.9 8 C3.2 10.6 5 12 7.5 12 C9.4 12 11 11.2 11.8 9.6" fill="none" stroke="#20a53a" stroke-width="1"/><path d="M13 9.4 C12.8 11.6 11.2 12.8 8.6 13" fill="none" stroke="#20a53a" stroke-width="1"/><circle cx="8" cy="13" r="0.9" fill="#20a53a"/><path d="M6 9.6 C6.8 10.4 8.2 10.4 9 9.6" fill="none" stroke="#20a53a" stroke-width="0.8"/></svg>
  <span style="top:33.5px">客</span><span style="top:48px">服</span>
  <svg style="left:11px;top:87.5px" width="14" height="13" viewBox="0 0 14 13"><path d="M6.4 1.6 H2 C1.3 1.6 0.8 2.1 0.8 2.8 V11 C0.8 11.7 1.3 12.2 2 12.2 H11 C11.7 12.2 12.2 11.7 12.2 11 V6.6" fill="none" stroke="#20a53a" stroke-width="1.3"/><path d="M5 8.6 L5.5 6.3 L10.9 0.9 L12.9 2.9 L7.5 8.3 Z" fill="none" stroke="#20a53a" stroke-width="1.1" stroke-linejoin="round"/></svg>
  <span style="top:110px">评</span><span style="top:124px">价</span>
</div>
</body>
</html>
